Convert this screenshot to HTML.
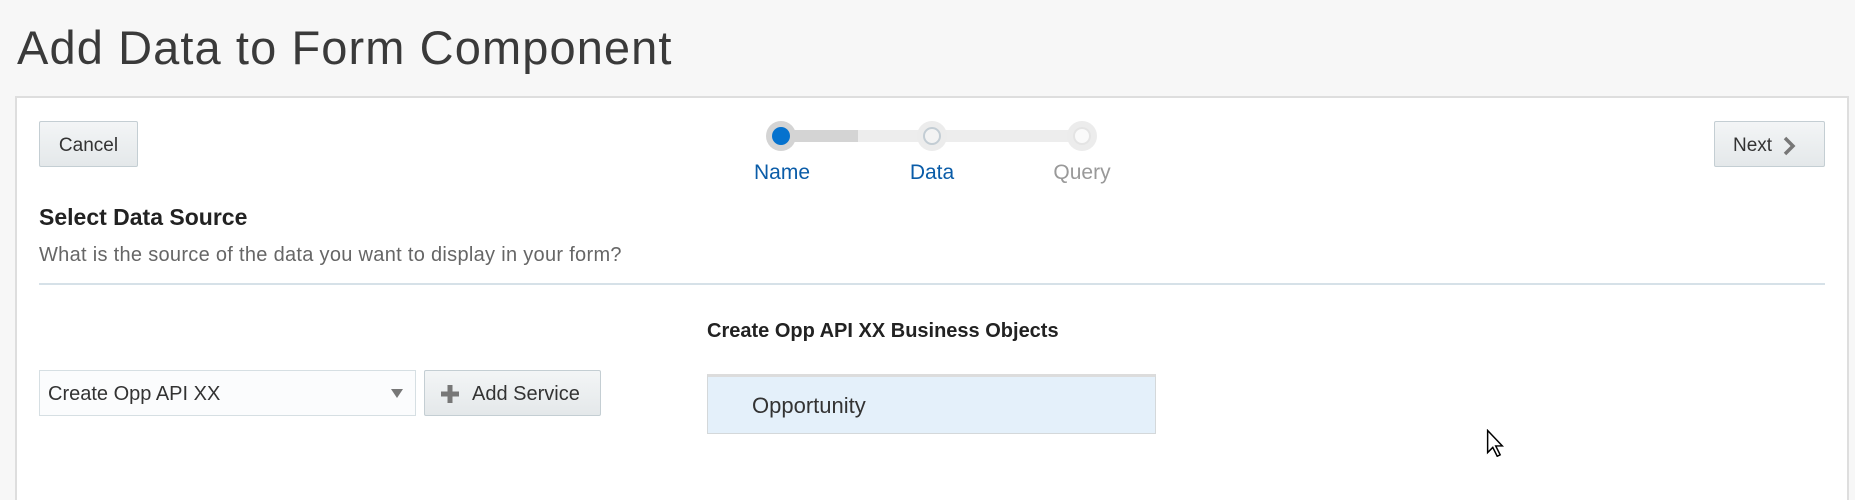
<!DOCTYPE html>
<html style="overflow:hidden;height:500px"><head><style>
*{box-sizing:border-box;margin:0;padding:0}
body{width:1855px;height:500px;background:#f7f7f7;font-family:"Liberation Sans",sans-serif;position:relative;overflow:hidden;color:#333}
.abs{position:absolute}
h1{position:absolute;left:17px;top:20px;font-size:47px;letter-spacing:1.1px;color:#3a3a3a;font-family:"Liberation Sans",sans-serif;font-weight:normal}
.panel{left:15px;top:96px;width:1834px;height:404px;background:#fff;border:2px solid #dedede;border-bottom:none}
.btn{position:absolute;background:linear-gradient(#f3f5f6,#e4e8ea);border:1px solid #c4ced3;border-radius:2px;font-size:19px;color:#333;display:flex;align-items:center;justify-content:center}
.circ{position:absolute;width:30px;height:30px;border-radius:50%;background:#ececec}
.lbl{position:absolute;top:161px;font-size:21px;transform:translateX(-50%)}
</style></head><body>
<h1>Add Data to Form Component</h1>
<div class="abs panel"></div>
<div class="btn" style="left:39px;top:121px;width:99px;height:46px;padding-top:3px">Cancel</div>
<div class="btn" style="left:1714px;top:121px;width:111px;height:46px;justify-content:flex-start;padding-left:18px;padding-top:3px">Next
<svg width="14" height="20" viewBox="0 0 14 20" style="margin-left:10px"><path d="M3 2l8 8-8 8" stroke="#777" stroke-width="3.5" fill="none"/></svg></div>
<div class="abs" style="left:781px;top:130px;width:301px;height:12px;background:#ededed"></div>
<div class="abs" style="left:781px;top:130px;width:77px;height:12px;background:#d4d4d4"></div>
<div class="circ" style="left:766px;top:121px;background:#d4d4d4"></div>
<div class="abs" style="left:772px;top:127px;width:18px;height:18px;border-radius:50%;background:#0572ce"></div>
<div class="circ" style="left:917px;top:121px"></div>
<div class="abs" style="left:923px;top:127px;width:18px;height:18px;border-radius:50%;border:2px solid #c3cdd4;background:#f3f3f3"></div>
<div class="circ" style="left:1067px;top:121px"></div>
<div class="abs" style="left:1073px;top:127px;width:18px;height:18px;border-radius:50%;border:2px solid #e4e4e4;background:#fafafa"></div>
<div class="lbl" style="left:782px;color:#0a5ca8">Name</div>
<div class="lbl" style="left:932px;color:#0a5ca8">Data</div>
<div class="lbl" style="left:1082px;color:#999">Query</div>
<div class="abs" style="left:39px;top:204px;font-size:23px;font-weight:bold;color:#222">Select Data Source</div>
<div class="abs" style="left:39px;top:244px;font-size:20px;letter-spacing:0.3px;color:#666">What is the source of the data you want to display in your form?</div>
<div class="abs" style="left:39px;top:283px;width:1786px;height:2px;background:#d6e1e8"></div>
<div class="abs" style="left:707px;top:320px;font-size:20px;font-weight:bold;color:#222">Create Opp API XX Business Objects</div>
<div class="abs" style="left:39px;top:370px;width:377px;height:46px;background:#fbfcfd;border:1px solid #d6dfe3;font-size:20px;padding:12px 8px;color:#333">Create Opp API XX
<svg class="abs" style="right:12px;top:18px" width="12" height="9"><path d="M0 0h12L6 9z" fill="#777"/></svg></div>
<div class="btn" style="left:424px;top:370px;width:177px;height:46px;justify-content:flex-start;padding-left:16px;font-size:20px;padding-top:2px">
<svg width="18" height="18" style="margin-right:13px"><path d="M6.5 0h5v6.5H18v5h-6.5V18h-5v-6.5H0v-5h6.5z" fill="#777"/></svg>Add Service</div>
<div class="abs" style="left:707px;top:374px;width:449px;height:60px;background:#e4f0fa;border:1px solid #d4d8da;border-top:3px solid #dcdcdc;font-size:22px;padding:16px 44px;color:#333">Opportunity</div>
<svg class="abs" style="left:1486px;top:429px" width="18" height="28" viewBox="0 0 12 19"><path d="M1 1v15l3.5-3.5 3 6 2-1-3-6H11z" fill="#fff" stroke="#000" stroke-width="1"/></svg>
</body></html>
